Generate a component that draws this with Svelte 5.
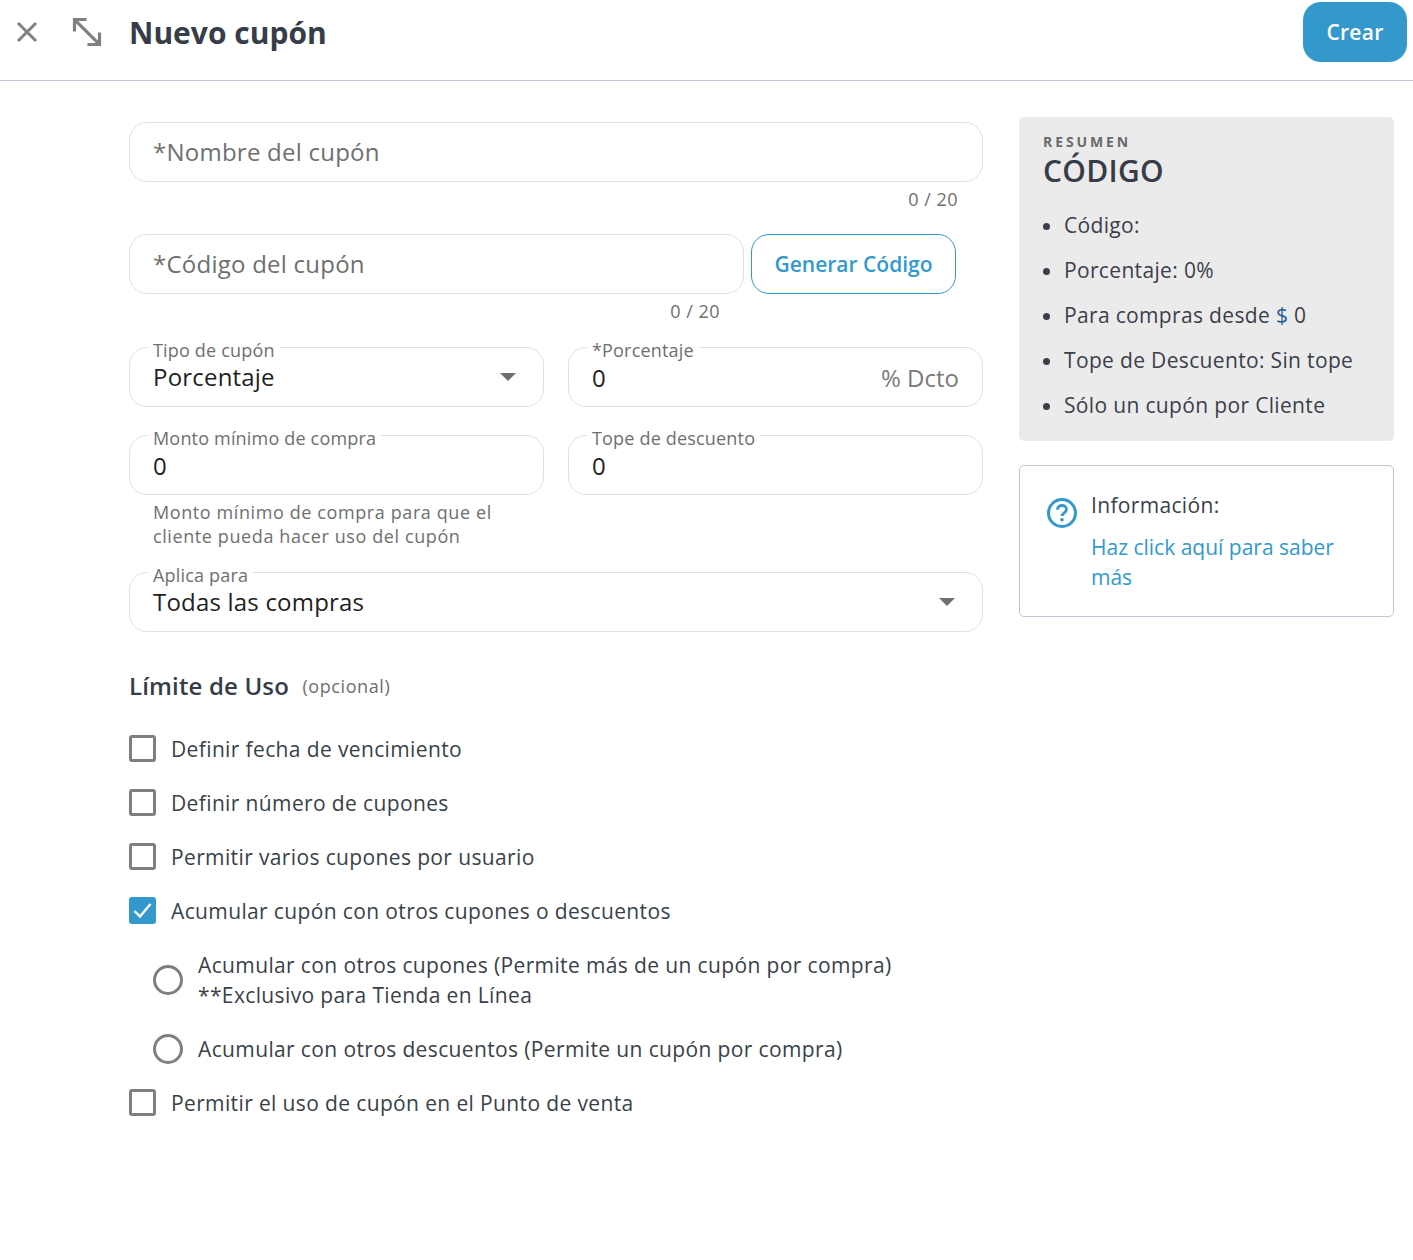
<script>
  let limits = $state([
    { label: "Definir fecha de vencimiento", checked: false },
    { label: "Definir número de cupones", checked: false },
    { label: "Permitir varios cupones por usuario", checked: false },
    { label: "Acumular cupón con otros cupones o descuentos", checked: true },
  ]);
  let pos = $state(false);

  const resumen = ["Código:", "Porcentaje: 0%"];
</script>

<header class="topbar">
  <button class="icon-btn close" aria-label="Cerrar">
    <svg width="24" height="24" viewBox="0 0 24 24"><path d="M3 3l18 18M21 3L3 21" fill="none" stroke="#808080" stroke-width="3" /></svg>
  </button>
  <button class="icon-btn expand" aria-label="Expandir">
    <svg width="32" height="32" viewBox="0 0 32 32"><path d="M3.500 15.500V3.500h12M3.800 3.800l24.400 24.400M28.500 16.500v12h-12" fill="none" stroke="#808080" stroke-width="3.200" /></svg>
  </button>
  <h1>Nuevo cupón</h1>
  <button class="crear">Crear</button>
</header>

<main class="page">
  <section class="form">
    <div class="field"><input placeholder="*Nombre del cupón" /></div>
    <div class="counter">0 / 20</div>

    <div class="code-row">
      <div class="field grow"><input placeholder="*Código del cupón" /></div>
      <button class="generar">Generar Código</button>
    </div>
    <div class="counter second">0 / 20</div>

    <div class="two-col first">
      <div class="field labelled">
        <span class="float">Tipo de cupón</span>
        <span class="value selected">Porcentaje</span>
        <span class="caret"></span>
      </div>
      <div class="field labelled">
        <span class="float">*Porcentaje</span>
        <span class="value">0</span>
        <span class="suffix">% Dcto</span>
      </div>
    </div>

    <div class="two-col">
      <div>
        <div class="field labelled">
          <span class="float">Monto mínimo de compra</span>
          <span class="value">0</span>
        </div>
        <p class="help">Monto mínimo de compra para que el cliente pueda hacer uso del cupón</p>
      </div>
      <div class="field labelled">
        <span class="float">Tope de descuento</span>
        <span class="value">0</span>
      </div>
    </div>

    <div class="field labelled applies">
      <span class="float">Aplica para</span>
      <span class="value selected">Todas las compras</span>
      <span class="caret"></span>
    </div>

    <h2>Límite de Uso <small>(opcional)</small></h2>

    <div class="checks">
      {#each limits as item}
        <label class="check">
          <input type="checkbox" bind:checked={item.checked} />
          <span class="box">
            {#if item.checked}
              <svg width="27" height="27" viewBox="0 0 27 27"><path d="M5.500 14l5.500 5.500L21.500 7" fill="none" stroke="#fff" stroke-width="2.400" /></svg>
            {/if}
          </span>
          <span>{item.label}</span>
        </label>
      {/each}
      <label class="radio tall">
        <input type="radio" name="acumular" />
        <span class="dot"></span>
        <span>Acumular con otros cupones (Permite más de un cupón por compra)<br />**Exclusivo para Tienda en Línea</span>
      </label>
      <label class="radio">
        <input type="radio" name="acumular" />
        <span class="dot"></span>
        <span>Acumular con otros descuentos (Permite un cupón por compra)</span>
      </label>
      <label class="check">
        <input type="checkbox" bind:checked={pos} />
        <span class="box"></span>
        <span>Permitir el uso de cupón en el Punto de venta</span>
      </label>
    </div>
  </section>

  <aside class="side">
    <div class="summary">
      <div class="eyebrow">RESUMEN</div>
      <div class="code-title">CÓDIGO</div>
      <ul>
        {#each resumen as line}
          <li>{line}</li>
        {/each}
        <li>Para compras desde <span class="money">$</span> 0</li>
        <li>Tope de Descuento: Sin tope</li>
        <li>Sólo un cupón por Cliente</li>
      </ul>
    </div>
    <div class="info">
      <svg class="q" width="32" height="32" viewBox="0 0 32 32">
        <circle cx="16" cy="16" r="13.500" fill="none" stroke="#3399cc" stroke-width="3" />
        <path d="M11.500 12.800c0-2.700 2-4.300 4.600-4.300 2.500 0 4.400 1.500 4.400 3.800 0 3.500-4.500 3.400-4.500 6.700" fill="none" stroke="#3399cc" stroke-width="2.800" />
        <circle cx="16" cy="22.800" r="1.800" fill="#3399cc" />
      </svg>
      <div>
        <div class="info-title">Información:</div>
        <a href="#top" class="info-link">Haz click aquí para saber más</a>
      </div>
    </div>
  </aside>
</main>

<style>
  :global(body) {
    font-family: "Open Sans", sans-serif;
    color: #3a3f4a;
    background: #fff;
  }

  .topbar {
    height: 80px;
    box-sizing: content-box;
    border-bottom: 1px solid #c9c4d3;
    display: flex;
    align-items: center;
    position: relative;
  }

  .icon-btn {
    background: none;
    border: none;
    padding: 0;
    display: flex;
    cursor: pointer;
    position: relative;
    top: -8px;
  }

  .close {
    margin: 0 0 0 15px;
  }

  .expand {
    margin-left: 32px;
  }

  h1 {
    margin: 0 0 0 26px;
    font-size: 30px;
    font-weight: 700;
    color: #363d49;
    position: relative;
    top: -8px;
  }

  .crear {
    margin-left: auto;
    margin-right: 6px;
    margin-bottom: 16px;
    width: 104px;
    height: 60px;
    border: none;
    border-radius: 18px;
    background: #3399cc;
    color: #fff;
    font: 600 21px "Open Sans", sans-serif;
    letter-spacing: 0.3px;
  }

  .page {
    display: flex;
    align-items: flex-start;
    padding-left: 129px;
  }

  .form {
    width: 854px;
    padding-top: 41px;
  }

  .field {
    height: 60px;
    box-sizing: border-box;
    border: 1px solid #e0e0e0;
    border-radius: 18px;
    position: relative;
    display: flex;
    align-items: center;
    padding: 0 23px;
  }

  .field input {
    border: none;
    outline: none;
    width: 100%;
    padding: 0;
    background: none;
    font: 24px "Open Sans", sans-serif;
    letter-spacing: 0.24px;
    position: relative;
    top: -1px;
  }

  .field input::placeholder {
    color: #6f6f6f;
    opacity: 1;
  }

  .counter {
    height: 52px;
    box-sizing: border-box;
    padding: 5px 25px 0 0;
    text-align: right;
    font-size: 18px;
    line-height: 24px;
    letter-spacing: 0.5px;
    color: #6f6f6f;
  }

  .counter.second {
    width: 616px;
    height: 53px;
  }

  .code-row {
    display: flex;
    align-items: center;
    padding-right: 27px;
    gap: 7px;
  }

  .grow {
    flex: 1;
  }

  .generar {
    width: 205px;
    height: 60px;
    background: #fff;
    border: 1px solid #3399cc;
    border-radius: 18px;
    color: #3399cc;
    font: 600 21px "Open Sans", sans-serif;
  }

  .two-col {
    display: grid;
    grid-template-columns: 415px 415px;
    gap: 24px;
    align-items: start;
    margin-bottom: 28px;
  }

  .two-col:has(.help) {
    margin-bottom: 24px;
  }

  .labelled {
    padding-top: 2px;
  }

  .float {
    position: absolute;
    left: 18px;
    top: -9px;
    padding: 0 5px;
    background: #fff;
    font-size: 18px;
    line-height: 22px;
    letter-spacing: 0.18px;
    color: #6f6f6f;
  }

  .value {
    position: relative;
    top: -1px;
    font-size: 24px;
    letter-spacing: 0.2px;
    color: #1f1f1f;
  }

  .value.selected {
    top: -2px;
  }

  .suffix {
    margin-left: auto;
    position: relative;
    top: -1px;
    font-size: 24px;
    color: #7a7a7a;
  }

  .caret {
    margin-left: auto;
    margin-right: 4px;
    position: relative;
    top: -1px;
    width: 0;
    height: 0;
    border-left: 8px solid transparent;
    border-right: 8px solid transparent;
    border-top: 8px solid #6f6f6f;
  }

  .help {
    margin: 5px 0 0;
    padding: 0 24px;
    font-size: 18px;
    line-height: 24px;
    letter-spacing: 0.6px;
    color: #6f6f6f;
  }

  h2 {
    margin: 38px 0 0;
    font-size: 24px;
    line-height: 32px;
    font-weight: 600;
    letter-spacing: 0.15px;
    color: #363d49;
  }

  h2 small {
    margin-left: 7px;
    font-size: 18px;
    font-weight: 400;
    letter-spacing: 0.6px;
    color: #6f6f6f;
    position: relative;
    top: -2px;
  }

  .checks {
    margin-top: 18px;
    display: flex;
    flex-direction: column;
    font-size: 21px;
    line-height: 30px;
    letter-spacing: 0.37px;
    color: #3a3f4a;
  }

  .check,
  .radio {
    display: flex;
    align-items: center;
    min-height: 54px;
  }

  .radio {
    padding-left: 24px;
  }

  .radio.tall {
    min-height: 84px;
  }

  .check input,
  .radio input {
    display: none;
  }

  .box {
    width: 27px;
    height: 27px;
    box-sizing: border-box;
    border: 3px solid #7f7f7f;
    border-radius: 3px;
    margin: -2px 15px 0 0;
    display: flex;
    align-items: center;
    justify-content: center;
    flex: none;
  }

  input:checked + .box {
    background: #3399cc;
    border: none;
  }

  .dot {
    width: 30px;
    height: 30px;
    box-sizing: border-box;
    border: 3px solid #7f7f7f;
    border-radius: 50%;
    margin-right: 15px;
    flex: none;
  }

  .side {
    width: 375px;
    margin-left: 36px;
    padding-top: 36px;
  }

  .summary {
    background: #ebebeb;
    border-radius: 5px;
    padding: 16px 24px 0;
    height: 324px;
    box-sizing: border-box;
  }

  .eyebrow {
    font-size: 14px;
    line-height: 18px;
    font-weight: 700;
    letter-spacing: 2.9px;
    color: #6a6a6a;
  }

  .code-title {
    font-size: 30px;
    line-height: 40px;
    font-weight: 600;
    letter-spacing: 0.3px;
    color: #363d49;
  }

  ul {
    margin: 12px 0 0;
    padding: 0 0 0 21px;
    font-size: 21px;
    line-height: 45px;
    letter-spacing: 0.34px;
    color: #3a3f4a;
  }

  .money {
    color: #1f5f99;
  }

  .info {
    margin-top: 24px;
    height: 152px;
    box-sizing: border-box;
    border: 1px solid #c9c4d3;
    border-radius: 5px;
    padding: 21px 26px;
    display: flex;
    gap: 13px;
  }

  .q {
    margin-top: 10px;
    flex: none;
  }

  .info-title {
    font-size: 21px;
    line-height: 36px;
    letter-spacing: 0.33px;
    color: #3a3f4a;
  }

  .info-link {
    display: block;
    margin-top: 9px;
    font-size: 21px;
    line-height: 30px;
    color: #3399cc;
    text-decoration: none;
  }
</style>
